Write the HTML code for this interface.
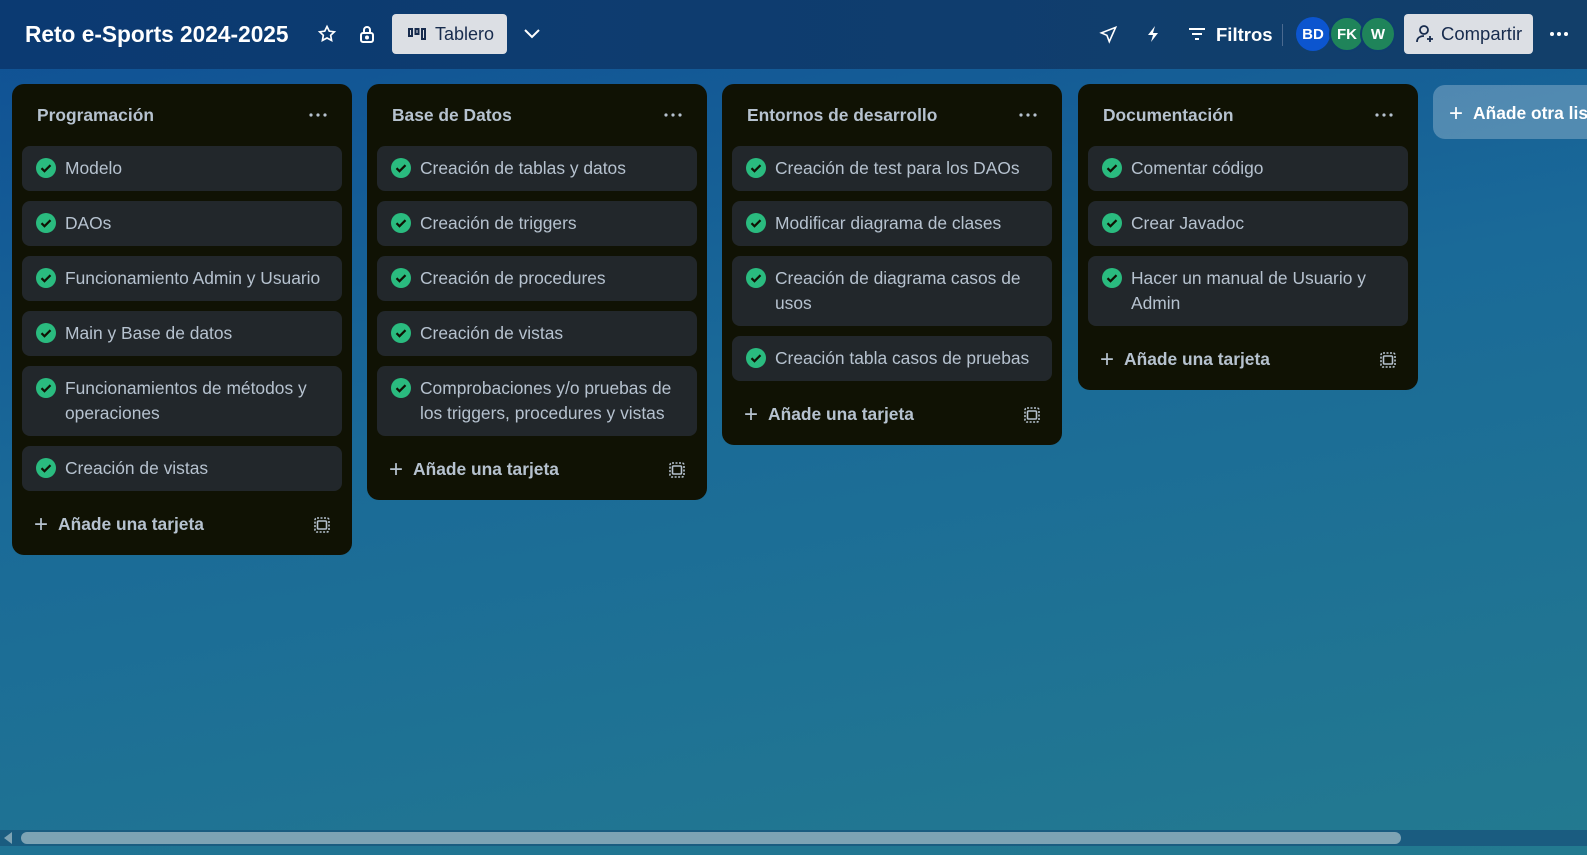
<!DOCTYPE html>
<html><head><meta charset="utf-8"><style>
*{box-sizing:border-box;margin:0;padding:0}
body{width:1587px;height:855px;overflow:hidden;font-family:"Liberation Sans",sans-serif;background:linear-gradient(170deg,#0f4f94 0%,#1a6a98 45%,#237a90 100%);position:relative}
.hdr{position:absolute;left:0;top:0;width:1587px;height:69px;background:linear-gradient(90deg,#0b3a72,#0f3d6e 60%,#123f6a);color:#fff}
.hdr .t{position:absolute;left:25px;top:21px;font-size:22.7px;font-weight:bold}
.ic{position:absolute;color:#fff}
.btn{position:absolute;background:#dcdfe4;border-radius:4px;color:#172b4d;font-size:18px;height:40px;top:14px;display:flex;align-items:center}
.list{position:absolute;top:84px;width:340px;background:#101204;border-radius:12px;padding:0 10px 3px}
.lt{height:62px;padding:0 15px;display:flex;align-items:center;justify-content:space-between;color:#b6c2cf;font-weight:bold;font-size:17.4px}
.card{background:#22272b;border-radius:8px;margin-bottom:10px;padding:10px 12px 10px 43px;color:#b6c2cf;font-size:17.4px;line-height:25px;position:relative}
.card svg{position:absolute;left:14px;top:12px}
.add{height:55px;display:flex;align-items:center;padding:0 12px;color:#b6c2cf;font-weight:bold;font-size:17.4px;justify-content:space-between;margin-top:-4px}
.av{position:absolute;top:17px;width:34px;height:34px;border-radius:50%;color:#fff;font-size:15px;font-weight:bold;display:flex;align-items:center;justify-content:center}
</style></head><body>
<div class="hdr">
<div class="t">Reto e-Sports 2024-2025</div>
<svg class="ic" style="left:317px;top:24px" width="20" height="20" viewBox="0 0 24 24" fill="none" stroke="#fff" stroke-width="2"><path d="M12 3l2.7 5.6 6.1.8-4.4 4.2 1.1 6.1L12 16.8 6.5 19.7l1.1-6.1L3.2 9.4l6.1-.8z"/></svg>
<svg class="ic" style="left:359px;top:25px" width="16" height="18" viewBox="0 0 16 18" fill="none" stroke="#fff" stroke-width="2"><rect x="2" y="8" width="12" height="9" rx="2"/><path d="M5 8V5a3 3 0 016 0v3"/><circle cx="8" cy="12.5" r="1" fill="#fff"/></svg>
<div class="btn" style="left:392px;width:115px;padding-left:16px"><svg width="18" height="12" viewBox="0 0 18 12" fill="none" stroke="#172b4d" stroke-width="2" style="margin-right:9px"><rect x="1" y="1" width="3" height="7"/><rect x="7.5" y="1" width="3" height="5"/><rect x="14" y="1" width="3" height="10"/></svg>Tablero</div>
<svg class="ic" style="left:522px;top:27px" width="20" height="14" viewBox="0 0 20 14" fill="none" stroke="#fff" stroke-width="2"><path d="M3 3l7 7 7-7"/></svg>
<svg class="ic" style="left:1099px;top:25px" width="19" height="19" viewBox="0 0 24 24" fill="none" stroke="#fff" stroke-width="2"><path d="M21 3L3 10l7 3 3 8z"/></svg>
<svg class="ic" style="left:1146px;top:25px" width="14" height="18" viewBox="0 0 14 18"><path d="M9 1L2 10h5l-2 7 7-9H7z" fill="#fff"/></svg>
<svg class="ic" style="left:1188px;top:27px" width="18" height="14" viewBox="0 0 18 14" stroke="#fff" stroke-width="2"><path d="M1 2h16M4 7h10M7 12h4"/></svg>
<div class="ic" style="left:1216px;top:24px;font-size:18.5px;font-weight:bold">Filtros</div>
<div style="position:absolute;left:1282px;top:24px;width:1px;height:22px;background:#4a6a90"></div>
<div class="av" style="left:1296px;background:#0c55cf">BD</div>
<div class="av" style="left:1329px;background:#1f845a;border:2px solid #0f3d6e;width:36px;height:36px;top:16px">FK</div>
<div class="av" style="left:1360px;background:#1f845a;border:2px solid #0f3d6e;width:36px;height:36px;top:16px">W</div>
<div class="btn" style="left:1404px;width:129px;padding-left:12px;font-size:18.5px"><svg width="20" height="20" viewBox="0 0 20 20" fill="none" stroke="#172b4d" stroke-width="1.8" style="margin-right:5px"><circle cx="8" cy="6" r="4"/><path d="M1 18c0-4 3-6 7-6M14 12v6M11 15h6"/></svg>Compartir</div>
<svg class="ic" style="left:1549px;top:31px" width="20" height="6"><circle cx="3" cy="3" r="2" fill="#fff"/><circle cx="10" cy="3" r="2" fill="#fff"/><circle cx="17" cy="3" r="2" fill="#fff"/></svg>
</div>

<div class="list" style="left:12px">
<div class="lt">Programación<svg width="18" height="4"><circle cx="2" cy="2" r="1.6" fill="#b6c2cf"/><circle cx="9" cy="2" r="1.6" fill="#b6c2cf"/><circle cx="16" cy="2" r="1.6" fill="#b6c2cf"/></svg></div>
<div class="card"><svg width="20" height="20"><circle cx="10" cy="10" r="10" fill="#2abb7f"/><path d="M5.5 10.2l3 3 6-6" stroke="#101204" stroke-width="2.2" fill="none"/></svg>Modelo</div>
<div class="card"><svg width="20" height="20"><circle cx="10" cy="10" r="10" fill="#2abb7f"/><path d="M5.5 10.2l3 3 6-6" stroke="#101204" stroke-width="2.2" fill="none"/></svg>DAOs</div>
<div class="card"><svg width="20" height="20"><circle cx="10" cy="10" r="10" fill="#2abb7f"/><path d="M5.5 10.2l3 3 6-6" stroke="#101204" stroke-width="2.2" fill="none"/></svg>Funcionamiento Admin y Usuario</div>
<div class="card"><svg width="20" height="20"><circle cx="10" cy="10" r="10" fill="#2abb7f"/><path d="M5.5 10.2l3 3 6-6" stroke="#101204" stroke-width="2.2" fill="none"/></svg>Main y Base de datos</div>
<div class="card"><svg width="20" height="20"><circle cx="10" cy="10" r="10" fill="#2abb7f"/><path d="M5.5 10.2l3 3 6-6" stroke="#101204" stroke-width="2.2" fill="none"/></svg>Funcionamientos de métodos y operaciones</div>
<div class="card"><svg width="20" height="20"><circle cx="10" cy="10" r="10" fill="#2abb7f"/><path d="M5.5 10.2l3 3 6-6" stroke="#101204" stroke-width="2.2" fill="none"/></svg>Creación de vistas</div>
<div class="add"><span><span style="font-weight:normal;font-size:24px;margin-right:10px;vertical-align:-2px">+</span>Añade una tarjeta</span><svg width="16" height="16" viewBox="0 0 16 16" fill="none" stroke="#b6c2cf" stroke-width="1.6"><rect x="1" y="1" width="14" height="14" rx="2" stroke-dasharray="2 1.5"/><rect x="3.5" y="4" width="9" height="8" rx="1"/></svg></div>
</div>

<div class="list" style="left:367px">
<div class="lt">Base de Datos<svg width="18" height="4"><circle cx="2" cy="2" r="1.6" fill="#b6c2cf"/><circle cx="9" cy="2" r="1.6" fill="#b6c2cf"/><circle cx="16" cy="2" r="1.6" fill="#b6c2cf"/></svg></div>
<div class="card"><svg width="20" height="20"><circle cx="10" cy="10" r="10" fill="#2abb7f"/><path d="M5.5 10.2l3 3 6-6" stroke="#101204" stroke-width="2.2" fill="none"/></svg>Creación de tablas y datos</div>
<div class="card"><svg width="20" height="20"><circle cx="10" cy="10" r="10" fill="#2abb7f"/><path d="M5.5 10.2l3 3 6-6" stroke="#101204" stroke-width="2.2" fill="none"/></svg>Creación de triggers</div>
<div class="card"><svg width="20" height="20"><circle cx="10" cy="10" r="10" fill="#2abb7f"/><path d="M5.5 10.2l3 3 6-6" stroke="#101204" stroke-width="2.2" fill="none"/></svg>Creación de procedures</div>
<div class="card"><svg width="20" height="20"><circle cx="10" cy="10" r="10" fill="#2abb7f"/><path d="M5.5 10.2l3 3 6-6" stroke="#101204" stroke-width="2.2" fill="none"/></svg>Creación de vistas</div>
<div class="card"><svg width="20" height="20"><circle cx="10" cy="10" r="10" fill="#2abb7f"/><path d="M5.5 10.2l3 3 6-6" stroke="#101204" stroke-width="2.2" fill="none"/></svg>Comprobaciones y/o pruebas de los triggers, procedures y vistas</div>
<div class="add"><span><span style="font-weight:normal;font-size:24px;margin-right:10px;vertical-align:-2px">+</span>Añade una tarjeta</span><svg width="16" height="16" viewBox="0 0 16 16" fill="none" stroke="#b6c2cf" stroke-width="1.6"><rect x="1" y="1" width="14" height="14" rx="2" stroke-dasharray="2 1.5"/><rect x="3.5" y="4" width="9" height="8" rx="1"/></svg></div>
</div>

<div class="list" style="left:722px">
<div class="lt">Entornos de desarrollo<svg width="18" height="4"><circle cx="2" cy="2" r="1.6" fill="#b6c2cf"/><circle cx="9" cy="2" r="1.6" fill="#b6c2cf"/><circle cx="16" cy="2" r="1.6" fill="#b6c2cf"/></svg></div>
<div class="card"><svg width="20" height="20"><circle cx="10" cy="10" r="10" fill="#2abb7f"/><path d="M5.5 10.2l3 3 6-6" stroke="#101204" stroke-width="2.2" fill="none"/></svg>Creación de test para los DAOs</div>
<div class="card"><svg width="20" height="20"><circle cx="10" cy="10" r="10" fill="#2abb7f"/><path d="M5.5 10.2l3 3 6-6" stroke="#101204" stroke-width="2.2" fill="none"/></svg>Modificar diagrama de clases</div>
<div class="card"><svg width="20" height="20"><circle cx="10" cy="10" r="10" fill="#2abb7f"/><path d="M5.5 10.2l3 3 6-6" stroke="#101204" stroke-width="2.2" fill="none"/></svg>Creación de diagrama casos de usos</div>
<div class="card"><svg width="20" height="20"><circle cx="10" cy="10" r="10" fill="#2abb7f"/><path d="M5.5 10.2l3 3 6-6" stroke="#101204" stroke-width="2.2" fill="none"/></svg>Creación tabla casos de pruebas</div>
<div class="add"><span><span style="font-weight:normal;font-size:24px;margin-right:10px;vertical-align:-2px">+</span>Añade una tarjeta</span><svg width="16" height="16" viewBox="0 0 16 16" fill="none" stroke="#b6c2cf" stroke-width="1.6"><rect x="1" y="1" width="14" height="14" rx="2" stroke-dasharray="2 1.5"/><rect x="3.5" y="4" width="9" height="8" rx="1"/></svg></div>
</div>

<div class="list" style="left:1078px">
<div class="lt">Documentación<svg width="18" height="4"><circle cx="2" cy="2" r="1.6" fill="#b6c2cf"/><circle cx="9" cy="2" r="1.6" fill="#b6c2cf"/><circle cx="16" cy="2" r="1.6" fill="#b6c2cf"/></svg></div>
<div class="card"><svg width="20" height="20"><circle cx="10" cy="10" r="10" fill="#2abb7f"/><path d="M5.5 10.2l3 3 6-6" stroke="#101204" stroke-width="2.2" fill="none"/></svg>Comentar código</div>
<div class="card"><svg width="20" height="20"><circle cx="10" cy="10" r="10" fill="#2abb7f"/><path d="M5.5 10.2l3 3 6-6" stroke="#101204" stroke-width="2.2" fill="none"/></svg>Crear Javadoc</div>
<div class="card"><svg width="20" height="20"><circle cx="10" cy="10" r="10" fill="#2abb7f"/><path d="M5.5 10.2l3 3 6-6" stroke="#101204" stroke-width="2.2" fill="none"/></svg>Hacer un manual de Usuario y Admin</div>
<div class="add"><span><span style="font-weight:normal;font-size:24px;margin-right:10px;vertical-align:-2px">+</span>Añade una tarjeta</span><svg width="16" height="16" viewBox="0 0 16 16" fill="none" stroke="#b6c2cf" stroke-width="1.6"><rect x="1" y="1" width="14" height="14" rx="2" stroke-dasharray="2 1.5"/><rect x="3.5" y="4" width="9" height="8" rx="1"/></svg></div>
</div>

<div style="position:absolute;left:1433px;top:85px;width:200px;height:54px;background:rgba(255,255,255,0.25);border-radius:12px;color:#fff;font-weight:bold;font-size:17.4px;padding:15px 0 0 16px;white-space:nowrap"><span style="font-weight:normal;font-size:24px;margin-right:10px;vertical-align:-2px">+</span>Añade otra lista</div>

<div style="position:absolute;left:0;top:830px;width:1587px;height:16px;background:#1a5c80"></div>
<div style="position:absolute;left:21px;top:832px;width:1380px;height:12px;border-radius:6px;background:#7ea3b4"></div>
<div style="position:absolute;left:4px;top:832px;width:0;height:0;border-top:6px solid transparent;border-bottom:6px solid transparent;border-right:8px solid #7ea3b4"></div>
</body></html>
